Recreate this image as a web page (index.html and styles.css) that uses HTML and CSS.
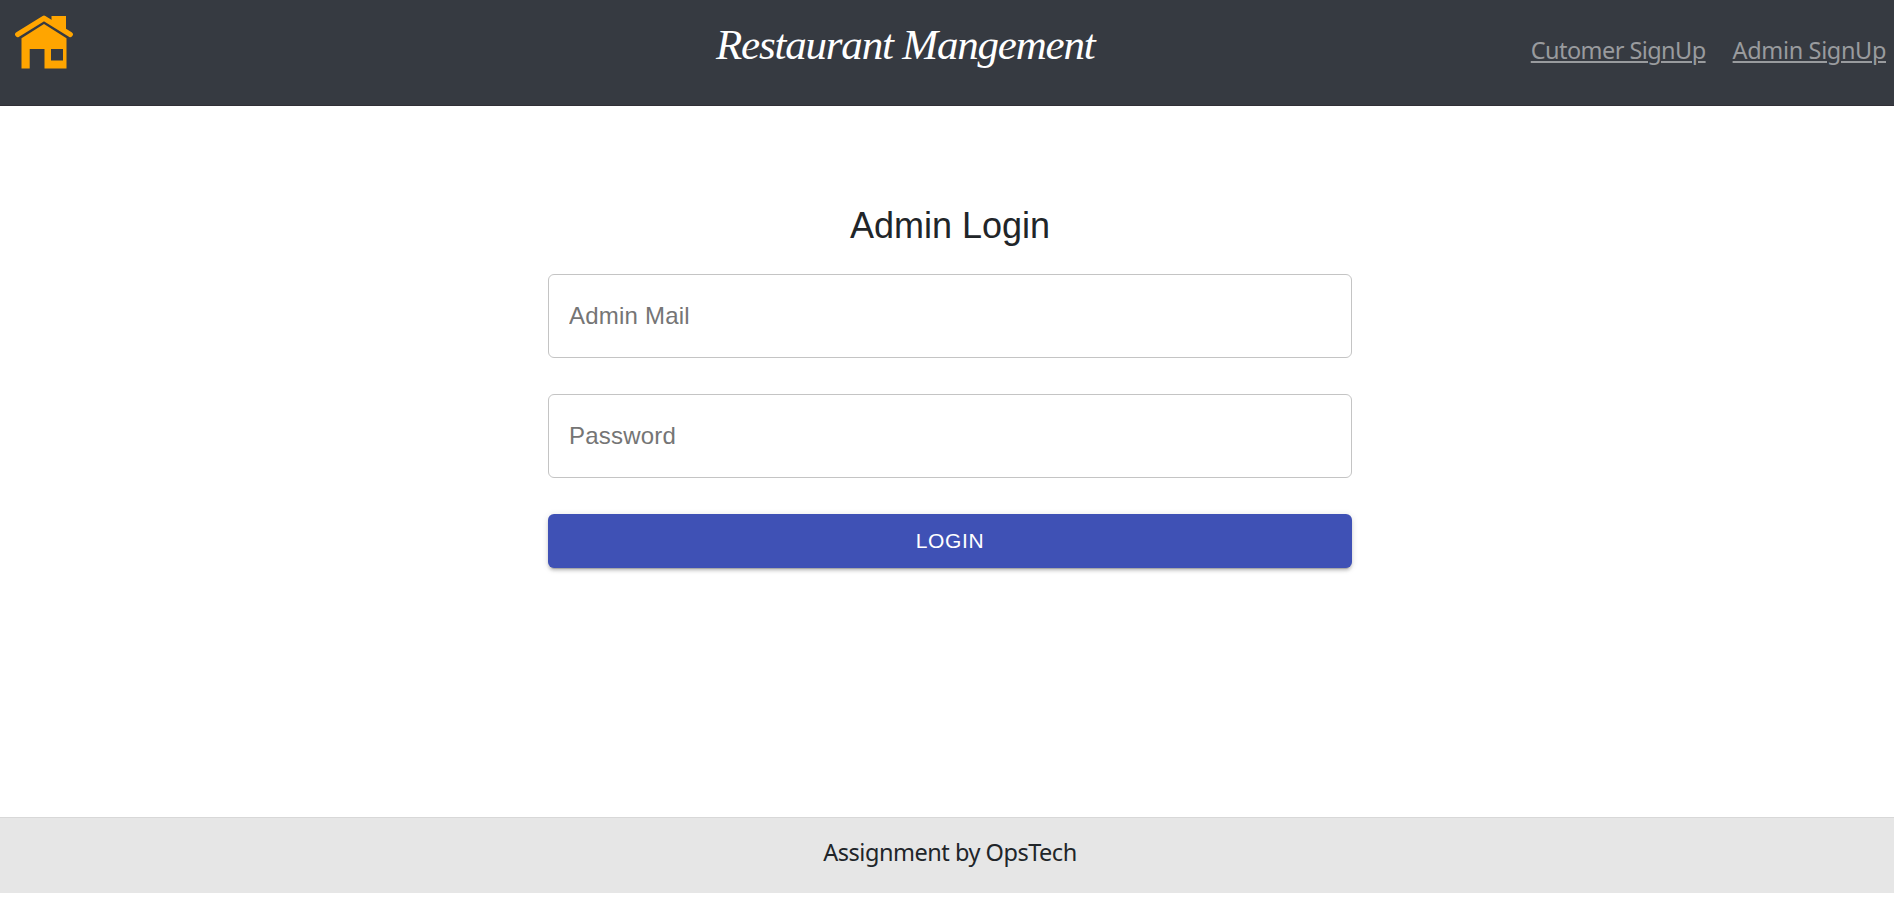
FILE: index.html
```
<!DOCTYPE html>
<html lang="en">
<head>
<meta charset="utf-8">
<title>Restaurant Mangement</title>
<link rel="stylesheet" href="styles.css">
</head>
<body>
<header class="navbar">
  <a class="home" href="#" aria-label="Home">
    <svg viewBox="0 0 60 56" width="60" height="56">
      <path class="roof" d="M2.700 19.500 29 3.200 55.300 19.500"/>
      <path class="solid" d="M36.500 1H51V16L36.500 8Z"/>
      <path class="solid" fill-rule="evenodd" d="M6.500 23.200 29 9 51.500 23.200V53.500H29.500V34H14.700V53.500H6.500ZM36 34V45.500H48V34Z"/>
    </svg>
  </a>
  <h1 class="brand">Restaurant Mangement</h1>
  <nav class="links"><a class="customer" href="#">Cutomer SignUp</a><a class="admin" href="#">Admin SignUp</a></nav>
</header>
<main class="content">
  <form class="login">
    <h2 class="title">Admin Login</h2>
    <input class="field" type="email" placeholder="Admin Mail">
    <input class="field" type="password" placeholder="Password">
    <button class="submit" type="button">LOGIN</button>
  </form>
</main>
<footer class="footer"><span>Assignment by OpsTech</span></footer>
</body>
</html>
```
FILE: styles.css
```
* { box-sizing: border-box; }
body {
  margin: 0;
  height: 901px;
  padding-bottom: 8px;
  display: flex;
  flex-direction: column;
  overflow: hidden;
  background: #fff;
  color: #212529;
  font-family: "Noto Sans", sans-serif;
}
.navbar {
  height: 106px;
  flex: none;
  display: grid;
  grid-template-columns: 716px 1fr auto;
  background: #363a41;
  border-bottom: 1px solid #302f36;
}
.home { padding: 15px 0 0 15px; }
.home svg { display: block; }
.roof { fill: none; stroke: orange; stroke-width: 5.2; stroke-linecap: round; stroke-linejoin: round; }
.solid { fill: orange; }
.brand {
  margin: 0;
  padding-top: 19px;
  color: #fff;
  font: italic 400 43px/52px "Liberation Serif", serif;
  letter-spacing: -1.2px;
  white-space: nowrap;
}
.links {
  display: flex;
  gap: 27px;
  padding: 33px 8px 0 0;
  font-size: 23.5px;
  line-height: 34px;
}
.links a {
  color: #999b9e;
  text-decoration: underline;
  text-decoration-thickness: 2px;
  text-underline-offset: 2px;
}
.customer { letter-spacing: -0.56px; }
.admin { letter-spacing: -0.36px; }
.content { flex: 1; padding-top: 98px; }
.login {
  width: 804px;
  margin-left: 548px;
  display: flex;
  flex-direction: column;
  font-family: "Liberation Sans", Arial, sans-serif;
}
.title {
  margin: 0 0 26px;
  font-size: 36px;
  font-weight: 400;
  line-height: 44px;
  text-align: center;
}
.field {
  height: 84px;
  margin: 0 0 36px;
  padding: 0 20px;
  border: 1px solid #c4c4c4;
  border-radius: 6px;
  background: #fff;
  font-family: inherit;
  font-size: 24px;
  letter-spacing: 0.22px;
}
.field::placeholder { color: #757575; opacity: 1; }
.submit {
  height: 54px;
  padding: 0;
  border: 0;
  border-radius: 6px;
  background: #3f51b5;
  color: #fff;
  font: 400 21px/36px "Liberation Sans", Arial, sans-serif;
  letter-spacing: 0.6px;
  box-shadow: 0 4px 1px -3px rgba(0,0,0,.2), 0 3px 3px rgba(0,0,0,.14), 0 1px 7px rgba(0,0,0,.12);
}
.footer {
  height: 76px;
  flex: none;
  padding: 17px 0 0 6px;
  border-top: 1px solid #d8d8d8;
  background: #e6e6e6;
  font-size: 23.5px;
  line-height: 34px;
  letter-spacing: -0.48px;
  text-align: center;
}
```
